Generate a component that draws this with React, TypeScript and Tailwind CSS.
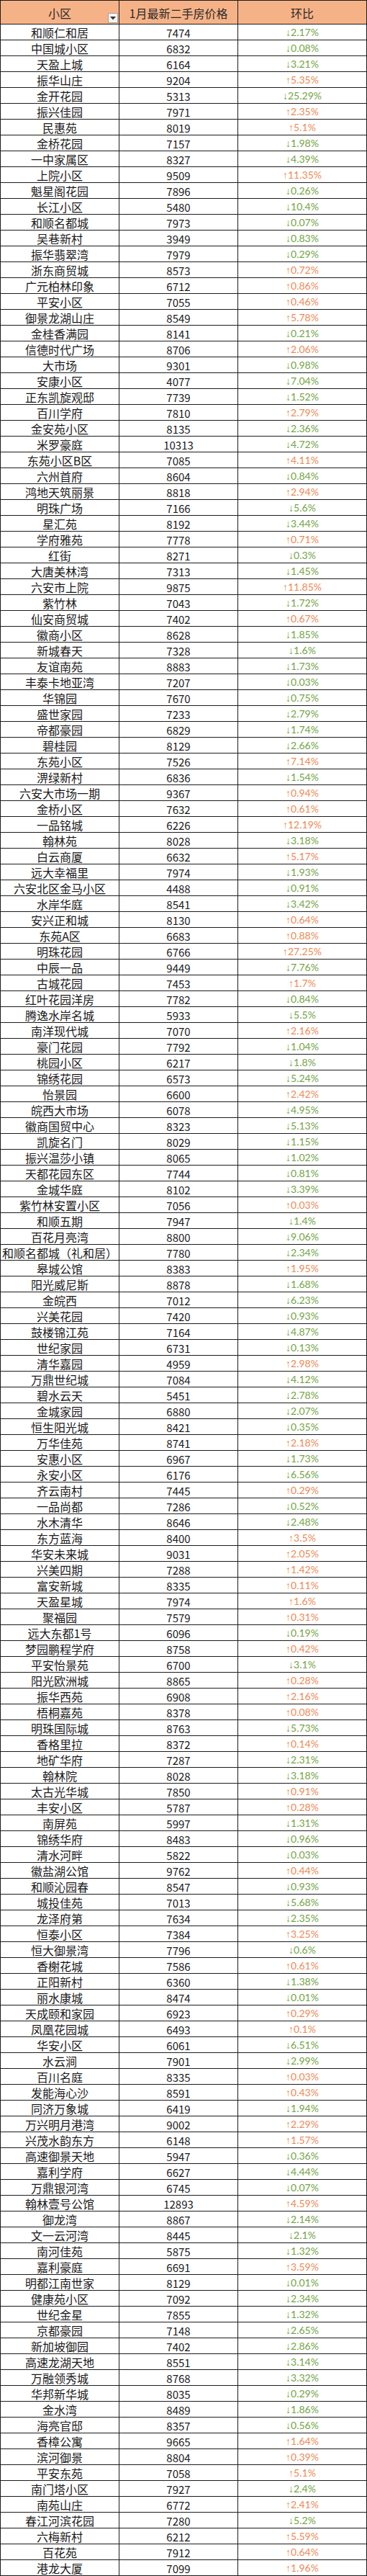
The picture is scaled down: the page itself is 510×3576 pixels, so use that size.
import React from "react";

const RAW = `和顺仁和居,7474,d2.17
中国城小区,6832,d0.08
天盈上城,6164,d3.21
振华山庄,9204,u5.35
金开花园,5313,d25.29
振兴佳园,7971,u2.35
民惠苑,8019,u5.1
金桥花园,7157,d1.98
一中家属区,8327,d4.39
上院小区,9509,u11.35
魁星阁花园,7896,d0.26
长江小区,5480,d10.4
和顺名都城,7973,d0.07
吴巷新村,3949,d0.83
振华翡翠湾,7979,d0.29
浙东商贸城,8573,u0.72
广元柏林印象,6712,u0.86
平安小区,7055,u0.46
御景龙湖山庄,8549,u5.78
金桂香满园,8141,d0.21
信德时代广场,8706,u2.06
大市场,9301,d0.98
安康小区,4077,d7.04
正东凯旋观邸,7739,d1.52
百川学府,7810,u2.79
金安苑小区,8135,d2.36
米罗豪庭,10313,d4.72
东苑小区B区,7085,u4.11
六州首府,8604,d0.84
鸿地天筑丽景,8818,u2.94
明珠广场,7166,d5.6
星汇苑,8192,d3.44
学府雅苑,7778,u0.71
红街,8271,d0.3
大唐美林湾,7313,d1.45
六安市上院,9875,u11.85
紫竹林,7043,d1.72
仙安商贸城,7402,u0.67
徽商小区,8628,d1.85
新城春天,7328,d1.6
友谊南苑,8883,d1.73
丰泰卡地亚湾,7207,d0.03
华锦园,7670,d0.75
盛世家园,7233,d2.79
帝都豪园,6829,d1.74
碧桂园,8129,d2.66
东苑小区,7526,u7.14
淠绿新村,6836,d1.54
六安大市场一期,9367,u0.94
金桥小区,7632,u0.61
一品铭城,6226,u12.19
翰林苑,8028,d3.18
白云商厦,6632,u5.17
远大幸福里,7974,d1.93
六安北区金马小区,4488,d0.91
水岸华庭,8541,d3.42
安兴正和城,8130,u0.64
东苑A区,6683,u0.88
明珠花园,6766,u27.25
中辰一品,9449,d7.76
古城花园,7453,u1.7
红叶花园洋房,7782,d0.84
腾逸水岸名城,5933,d5.5
南洋现代城,7070,u2.16
豪门花园,7792,d1.04
桃园小区,6217,d1.8
锦绣花园,6573,d5.24
怡景园,6600,u2.42
皖西大市场,6078,d4.95
徽商国贸中心,8323,d5.13
凯旋名门,8029,d1.15
振兴温莎小镇,8065,d1.02
天都花园东区,7744,d0.81
金城华庭,8102,d3.39
紫竹林安置小区,7056,u0.03
和顺五期,7947,d1.4
百花月亮湾,8800,d9.06
和顺名都城（礼和居）,7780,d2.34
皋城公馆,8383,u1.95
阳光威尼斯,8878,d1.68
金皖西,7012,d6.23
兴美花园,7420,d0.93
鼓楼锦江苑,7164,d4.87
世纪家园,6731,d0.13
清华嘉园,4959,u2.98
万鼎世纪城,7084,d4.12
碧水云天,5451,d2.78
金城家园,6880,d2.07
恒生阳光城,8421,d0.35
万华佳苑,8741,u2.18
安惠小区,6967,d1.73
永安小区,6176,d6.56
齐云南村,7445,u0.29
一品尚都,7286,d0.52
水木清华,8646,d2.48
东方蓝海,8400,u3.5
华安未来城,9031,u2.05
兴美四期,7288,u1.42
富安新城,8335,u0.11
天盈星城,7974,u1.6
聚福园,7579,u0.31
远大东都1号,6096,d0.19
梦园鹏程学府,8758,u0.42
平安怡景苑,6700,d3.1
阳光欧洲城,8865,u0.28
振华西苑,6908,u2.16
梧桐嘉苑,8378,u0.08
明珠国际城,8763,d5.73
香格里拉,8372,u0.14
地矿华府,7287,d2.31
翰林院,8028,d3.18
太古光华城,7850,u0.91
丰安小区,5787,u0.28
南屏苑,5997,d1.31
锦绣华府,8483,d0.96
清水河畔,5822,d0.03
徽盐湖公馆,9762,u0.44
和顺沁园春,8547,d0.93
城投佳苑,7013,d5.68
龙泽府第,7634,d2.35
恒泰小区,7384,u3.25
恒大御景湾,7796,d0.6
香榭花城,7586,u0.61
正阳新村,6360,d1.38
丽水康城,8474,d0.01
天成颐和家园,6923,u0.29
凤凰花园城,6493,u0.1
华安小区,6061,d6.51
水云涧,7901,d2.99
百川名庭,8335,u0.03
发能海心沙,8591,u0.43
同济万象城,6419,d1.94
万兴明月港湾,9002,u2.29
兴茂水韵东方,6148,u1.57
高速御景天地,5947,d0.36
嘉利学府,6627,d4.44
万鼎银河湾,6745,d0.07
翰林壹号公馆,12893,u4.59
御龙湾,8867,d2.14
文一云河湾,8445,d2.1
南河佳苑,5875,d1.32
嘉利豪庭,6691,u3.59
明都江南世家,8129,d0.01
健康苑小区,7092,d2.34
世纪金星,7855,d1.32
京都豪园,7148,d2.65
新加坡御园,7402,d2.86
高速龙湖天地,8551,d3.14
万融领秀城,8768,d3.32
华邦新华城,8035,d0.29
金水湾,8489,d1.86
海亮官邸,8357,d0.56
香樟公寓,9665,u1.64
滨河御景,8804,u0.39
平安东苑,7058,u5.1
南门塔小区,7927,d2.4
南苑山庄,6772,u2.41
春江河滨花园,7280,d5.2
六梅新村,6212,u5.59
百花苑,7912,u0.64
港龙大厦,7099,u1.96`;

type Row = { name: string; price: string; up: boolean; pct: string };

const rows: Row[] = RAW.split("\n").map((line) => {
  const [name, price, change] = line.split(",");
  return { name, price, up: change[0] === "u", pct: change.slice(1) + "%" };
});

export default function App() {
  return (
    <div className="w-[510px] bg-white border-l border-[#1c1c1c] text-[#1a1a1a] font-['Noto_Sans_CJK_SC','Noto_Sans',sans-serif]">
      <div className="flex h-[34px] border-t border-b border-[#1c1c1c] bg-[#f6b287] text-[16px] leading-none text-[#2a2a2a]">
        <div className="relative w-[165px] border-r border-[#1c1c1c] flex items-center justify-center pt-[2px]">
          小区
          <div className="absolute right-[1px] bottom-[1px] w-[14px] h-[14px] bg-[#f3f3f3] border border-[#a3a3a3] flex items-center justify-center">
            <svg width="8" height="5" viewBox="0 0 8 5">
              <path d="M0 0 L8 0 L4 4.5 Z" fill="#333" />
            </svg>
          </div>
        </div>
        <div className="w-[165px] border-r border-[#1c1c1c] flex items-center justify-center pt-[2px] whitespace-nowrap">
          1月最新二手房价格
        </div>
        <div className="w-[179px] border-r border-[#1c1c1c] flex items-center justify-center pt-[2px]">
          环比
        </div>
      </div>
      {rows.map((r, i) => (
        <div key={i} className="flex h-[22px] border-b border-[#1c1c1c] leading-none">
          <div className="w-[165px] border-r border-[#1c1c1c] flex items-center justify-center pt-[1px] text-[16px] whitespace-nowrap">
            {r.name}
          </div>
          <div className="w-[165px] border-r border-[#1c1c1c] flex items-center justify-center pt-[1px] text-[15px]">
            {r.price}
          </div>
          <div
            className={
              r.up
                ? "w-[179px] border-r border-[#1c1c1c] flex items-center justify-center pt-[1px] text-[14px] text-[#ee8a55]"
                : "w-[179px] border-r border-[#1c1c1c] flex items-center justify-center pt-[1px] text-[14px] text-[#74a544]"
            }
          >
            <span className="font-['Liberation_Sans','DejaVu_Sans',sans-serif]">{r.up ? "↑" : "↓"}</span>
            <span className="font-['Lato','Liberation_Sans',sans-serif]">{r.pct}</span>
          </div>
        </div>
      ))}
    </div>
  );
}
